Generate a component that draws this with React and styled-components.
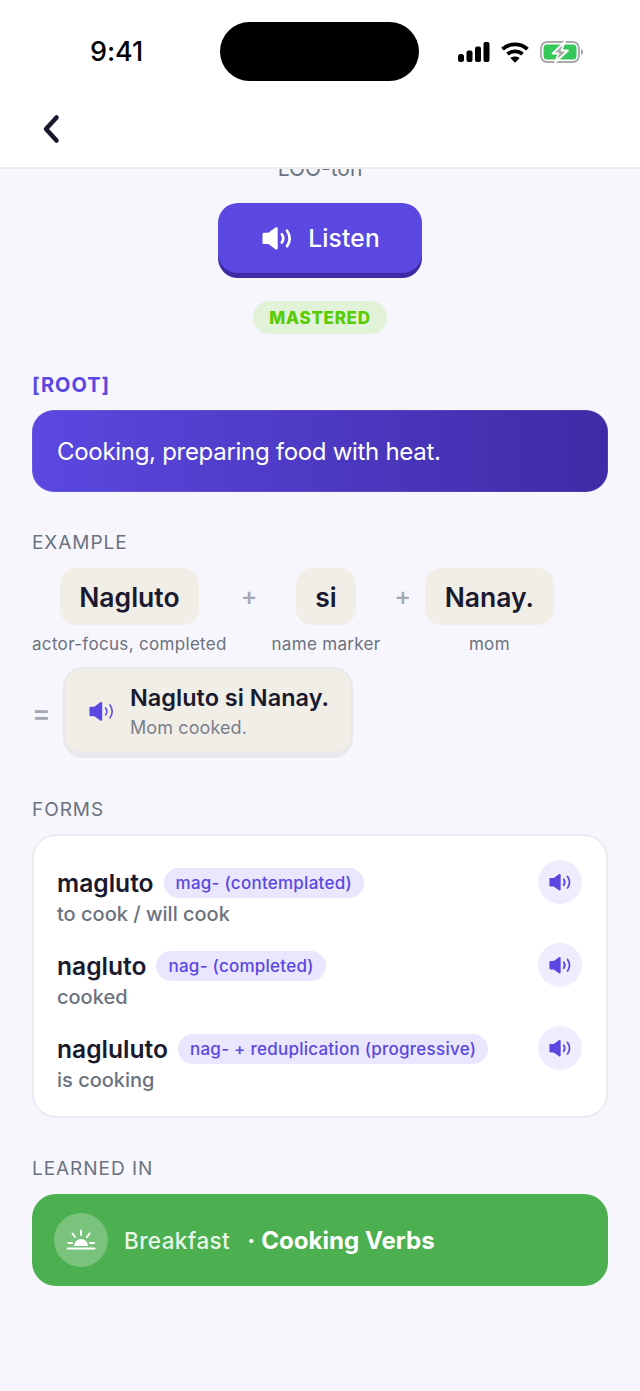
import React from "react";
import styled, { createGlobalStyle } from "styled-components";

const PURPLE = "#5b48e0";
const INK = "#1a1a2e";
const GREY = "#6b7280";

const forms = [
  { word: "magluto", tag: "mag- (contemplated)", meaning: "to cook / will cook" },
  { word: "nagluto", tag: "nag- (completed)", meaning: "cooked" },
  { word: "nagluluto", tag: "nag- + reduplication (progressive)", meaning: "is cooking" },
];

function Speaker({ size = 30, color = "currentColor", weight = 2.2 }) {
  return (
    <svg width={size} height={size * 0.8} viewBox="0 0 30 24" fill="none">
      <path
        d="M2.200 6.500h4L13 1.500c1-.7 2.200-.1 2.200 1v19c0 1.100-1.200 1.700-2.200 1l-6.800-5H2.200C1 17.500.5 17 .5 16V8C.5 7 1 6.500 2.200 6.500z"
        fill={color}
      />
      <path d="M19.200 8c1.800 2.600 1.800 5.400 0 8" stroke={color} strokeWidth={weight} strokeLinecap="round" />
      <path d="M24.200 4.500c3.200 4.700 3.200 10.300 0 15" stroke={color} strokeWidth={weight} strokeLinecap="round" />
    </svg>
  );
}

function App() {
  return (
    <>
      <GlobalStyle />
      <Screen>
        <Header>
          <StatusBar>
            <Time>9:41</Time>
            <Island />
            <StatusIcons>
              <svg width="32" height="20" viewBox="0 0 32 20" fill="#000">
                <rect x="0" y="12" width="6" height="8" rx="2.500" />
                <rect x="8.500" y="8.500" width="6" height="11.500" rx="2" />
                <rect x="17" y="4.500" width="6" height="15.500" rx="2" />
                <rect x="25.500" y="0" width="6" height="20" rx="2" />
              </svg>
              <svg width="28" height="21" viewBox="0 0 28 21" fill="none" stroke="#000" strokeWidth="3.800">
                <path d="M1.500 7.200C8.500 .8 19.500 .8 26.500 7.200" />
                <path d="M6.500 12.200c4.300-3.800 10.700-3.800 15 0" />
                <path d="M14 20.800l-4.600-4.700c2.600-2 6.600-2 9.200 0z" fill="#000" stroke="none" />
              </svg>
              <svg width="44" height="22" viewBox="0 0 44 22" fill="none">
                <rect x="1" y="1" width="38" height="20" rx="6" stroke="#a9a9a9" strokeWidth="1.800" />
                <rect x="3.500" y="3.500" width="33" height="15" rx="3.500" fill="#34c759" />
                <path d="M41 8v6c1.300-.4 2.200-1.600 2.200-3S42.300 8.400 41 8z" fill="#a9a9a9" />
                <path
                  d="M25 0.500L12.500 12.500h6L15 21.500 28 9.500h-6.500z"
                  fill="#a9a9a9"
                  stroke="#fff"
                  strokeWidth="1.800"
                  strokeLinejoin="round"
                />
              </svg>
            </StatusIcons>
          </StatusBar>
          <NavBar>
            <svg width="20" height="30" viewBox="0 0 20 30" fill="none">
              <path d="M15.500 3.500L5 15l10.500 11.500" stroke={INK} strokeWidth="4.600" strokeLinecap="round" strokeLinejoin="round" />
            </svg>
          </NavBar>
        </Header>

        <Content>
          <Pronunciation>LOO-ton</Pronunciation>
          <ListenButton>
            <Speaker size={31} color="#fff" weight={2.6} />
            Listen
          </ListenButton>
          <StatusPill>MASTERED</StatusPill>

          <RootTag>[ROOT]</RootTag>
          <DefinitionCard>Cooking, preparing food with heat.</DefinitionCard>

          <SectionLabel>EXAMPLE</SectionLabel>
          <Breakdown>
            <Part>
              <Tile>Nagluto</Tile>
              <Gloss>actor-focus, completed</Gloss>
            </Part>
            <Plus>+</Plus>
            <Part>
              <Tile>si</Tile>
              <Gloss>name marker</Gloss>
            </Part>
            <Plus>+</Plus>
            <Part>
              <Tile>Nanay.</Tile>
              <Gloss>mom</Gloss>
            </Part>
          </Breakdown>
          <ResultRow>
            <Equals>=</Equals>
            <ResultCard>
              <Speaker size={26} color={PURPLE} weight={1.8} />
              <div>
                <ResultTitle>Nagluto si Nanay.</ResultTitle>
                <ResultSub>Mom cooked.</ResultSub>
              </div>
            </ResultCard>
          </ResultRow>

          <SectionLabel $gap={40}>FORMS</SectionLabel>
          <FormsCard>
            {forms.map((f) => (
              <FormRow key={f.word}>
                <FormText>
                  <FormHead>
                    <FormWord>{f.word}</FormWord>
                    <FormTag>{f.tag}</FormTag>
                  </FormHead>
                  <FormMeaning>{f.meaning}</FormMeaning>
                </FormText>
                <PlayButton>
                  <Speaker size={23} color={PURPLE} weight={2.3} />
                </PlayButton>
              </FormRow>
            ))}
          </FormsCard>

          <SectionLabel $gap={39}>LEARNED IN</SectionLabel>
          <LessonCard>
            <LessonIcon>
              <svg width="32" height="24" viewBox="0 0 32 24" fill="none" stroke="#fff" strokeWidth="2" strokeLinecap="round">
                <path d="M9 18a7 7 0 0 1 14 0z" fill="#fff" stroke="none" />
                <path d="M16 2.500V7M7.500 5.500L10 9M24.500 5.500L22 9M3.500 15h3.500M25 15h4" />
                <path d="M2.500 20.500h27" />
              </svg>
            </LessonIcon>
            <LessonName>Breakfast</LessonName>
            <LessonDot>·</LessonDot>
            <LessonTopic>Cooking Verbs</LessonTopic>
          </LessonCard>
        </Content>
      </Screen>
    </>
  );
}

export default App;

const GlobalStyle = createGlobalStyle`
  html, body {
    margin: 0;
    padding: 0;
    background: #f7f6fd;
    font-family: Inter, "Liberation Sans", sans-serif;
  }
  * { box-sizing: border-box; }
`;

const Screen = styled.div`
  width: 640px;
  height: 1391px;
  display: flex;
  flex-direction: column;
  overflow: hidden;
  background: #f7f6fd;
`;

const Header = styled.header`
  flex: none;
  height: 169px;
  background: #fff;
  border-bottom: 2px solid #ebebf0;
`;

const StatusBar = styled.div`
  height: 88px;
  padding: 22px 56px 0 90px;
  display: flex;
  align-items: flex-start;
`;

const Time = styled.div`
  width: 130px;
  margin-top: 14px;
  font-size: 27px;
  line-height: 32px;
  font-weight: 550;
  letter-spacing: -0.100px;
  color: #000;
`;

const Island = styled.div`
  width: 200px;
  height: 59px;
  border-radius: 30px;
  background: #000;
`;

const StatusIcons = styled.div`
  margin-left: 39px;
  margin-top: 19px;
  display: flex;
  align-items: center;
  gap: 11px;
`;

const NavBar = styled.div`
  height: 79px;
  padding: 26px 0 0 41px;
`;

const Content = styled.main`
  flex: 1;
  min-height: 0;
  overflow: hidden;
  padding: 0 32px;
  display: flex;
  flex-direction: column;
`;

const Pronunciation = styled.div`
  margin-top: -12px;
  height: 24px;
  line-height: 24px;
  text-align: center;
  font-size: 21px;
  color: ${GREY};
`;

const ListenButton = styled.button`
  align-self: center;
  margin-top: 22px;
  width: 204px;
  height: 70px;
  padding: 0 0 0 2px;
  border: 0;
  border-radius: 20px;
  background: ${PURPLE};
  box-shadow: 0 5px 0 #3f2ba5;
  color: #fff;
  font: 500 24.500px Inter, sans-serif;
  letter-spacing: 0.200px;
  display: flex;
  align-items: center;
  justify-content: center;
  gap: 15px;
`;

const StatusPill = styled.div`
  align-self: center;
  margin-top: 28px;
  width: 134px;
  height: 33px;
  border-radius: 17px;
  background: #e2f2d9;
  color: #58cc02;
  font-size: 17px;
  font-weight: 800;
  letter-spacing: 0.700px;
  display: flex;
  align-items: center;
  justify-content: center;
`;

const RootTag = styled.div`
  margin-top: 40px;
  height: 22px;
  line-height: 22px;
  font-size: 20px;
  font-weight: 700;
  letter-spacing: 1px;
  color: ${PURPLE};
`;

const DefinitionCard = styled.div`
  margin-top: 14px;
  height: 82px;
  padding: 0 25px;
  border-radius: 22px;
  display: flex;
  align-items: center;
  background: linear-gradient(90deg, ${PURPLE}, #3f2ba5);
  box-shadow: inset 0 0 0 1px rgba(255, 255, 255, 0.08);
  color: #fff;
  font-size: 24px;
  letter-spacing: -0.300px;
`;

const SectionLabel = styled.div`
  height: 24px;
  line-height: 24px;
  margin-top: ${(p) => p.$gap || 39}px;
  font-size: 19px;
  letter-spacing: 0.950px;
  color: ${GREY};
`;

const Breakdown = styled.div`
  margin-top: 13px;
  display: flex;
  align-items: flex-start;
  gap: 14px;
`;

const Part = styled.div`
  display: flex;
  flex-direction: column;
  align-items: center;
  gap: 8px;
`;

const Tile = styled.div`
  height: 57px;
  padding: 0 19.500px;
  border-radius: 16px;
  background: #f1eee8;
  color: ${INK};
  font-size: 26.500px;
  font-weight: 600;
  display: flex;
  align-items: center;
`;

const Gloss = styled.div`
  font-size: 17px;
  line-height: 22px;
  letter-spacing: 0.320px;
  color: ${GREY};
`;

const Plus = styled.div`
  height: 57px;
  line-height: 57px;
  font-size: 25px;
  font-weight: 500;
  color: #a3a7b3;
`;

const ResultRow = styled.div`
  margin-top: 12px;
  display: flex;
  align-items: center;
  gap: 14px;
`;

const Equals = styled.div`
  width: 17px;
  font-size: 28px;
  font-weight: 500;
  color: #a3a7b3;
`;

const ResultCard = styled.div`
  width: 290px;
  height: 91px;
  padding: 1px 10px 0 24px;
  display: flex;
  align-items: center;
  gap: 15px;
  border: 2px solid #e8e8ed;
  border-bottom-width: 6px;
  border-radius: 20px;
  background: #f1eee8;
`;

const ResultTitle = styled.div`
  font-size: 23.500px;
  line-height: 32px;
  font-weight: 600;
  white-space: nowrap;
  color: ${INK};
`;

const ResultSub = styled.div`
  font-size: 18px;
  line-height: 27px;
  letter-spacing: 0.100px;
  color: #7a7f8c;
`;

const FormsCard = styled.section`
  margin-top: 12px;
  height: 284px;
  padding: 24px 24px 0 23px;
  border: 2px solid #ecebf2;
  border-radius: 24px;
  background: #fff;
  display: flex;
  flex-direction: column;
  gap: 23px;
`;

const FormRow = styled.div`
  height: 60px;
  display: flex;
  justify-content: space-between;
  align-items: flex-start;
`;

const FormText = styled.div`
  padding-top: 8px;
`;

const FormHead = styled.div`
  display: flex;
  align-items: center;
  gap: 10px;
`;

const FormWord = styled.div`
  font-size: 24.600px;
  line-height: 30px;
  font-weight: 560;
  color: ${INK};
`;

const FormTag = styled.div`
  height: 30px;
  line-height: 30px;
  padding: 0 12px;
  border-radius: 15px;
  background: #e9e6fd;
  color: ${PURPLE};
  font-size: 17px;
  font-weight: 450;
  letter-spacing: 0.250px;
`;

const FormMeaning = styled.div`
  margin-top: 3px;
  font-size: 20px;
  line-height: 26px;
  font-weight: 450;
  color: ${GREY};
`;

const PlayButton = styled.button`
  width: 44px;
  height: 44px;
  padding: 0 0 0 1px;
  border: 0;
  border-radius: 50%;
  background: #efecfe;
  display: flex;
  align-items: center;
  justify-content: center;
`;

const LessonCard = styled.section`
  margin-top: 13px;
  height: 92px;
  padding: 0 22px;
  border-radius: 24px;
  background: #4caf50;
  color: #fff;
  display: flex;
  align-items: center;
`;

const LessonIcon = styled.div`
  width: 54px;
  height: 54px;
  border-radius: 50%;
  background: rgba(255, 255, 255, 0.25);
  display: flex;
  align-items: center;
  justify-content: center;
`;

const LessonName = styled.div`
  margin-left: 16px;
  font-size: 22.500px;
  letter-spacing: 0.400px;
  font-weight: 450;
  color: rgba(255, 255, 255, 0.9);
`;

const LessonDot = styled.div`
  margin-left: 17px;
  width: 14px;
  font-size: 24px;
  font-weight: 700;
`;

const LessonTopic = styled.div`
  font-size: 24.100px;
  font-weight: 700;
`;
